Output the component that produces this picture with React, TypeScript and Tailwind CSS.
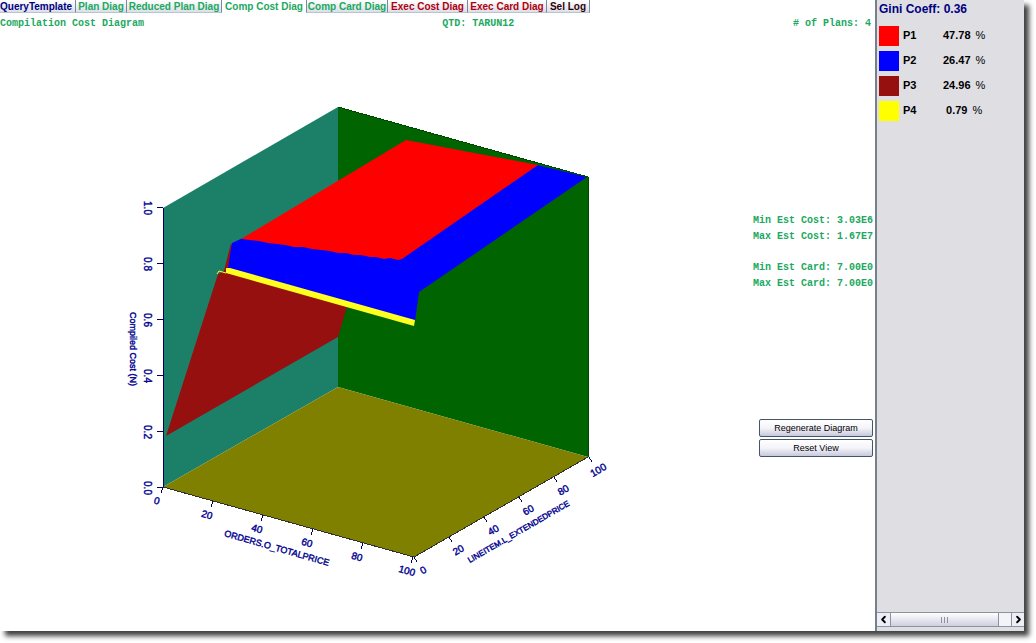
import { ChevronLeft, ChevronRight } from "lucide-react";

const tabs = [
  { label: "QueryTemplate", style: "w-[76px] text-left text-[#000080]" },
  { label: "Plan Diag", style: "w-[51px] text-[#20a860]" },
  { label: "Reduced Plan Diag", style: "w-[95px] text-[#20a860]" },
  { label: "Comp Cost Diag", style: "w-[84px] text-[#20a860]", active: true },
  { label: "Comp Card Diag", style: "w-[82px] border-l text-[#20a860]" },
  { label: "Exec Cost Diag", style: "w-[80px] text-[#b00010]" },
  { label: "Exec Card Diag", style: "w-[79px] text-[#b00010]" },
  { label: "Sel Log", style: "w-[43px] text-[#300008]" },
];

const plans = [
  { name: "P1", percent: "47.78", color: "bg-[#ff0000]" },
  { name: "P2", percent: "26.47", color: "bg-[#0000ff]" },
  { name: "P3", percent: "24.96", color: "bg-[#961010]" },
  { name: "P4", percent: "0.79", color: "bg-[#ffff00]" },
];

const costTicks = ["0.0", "0.2", "0.4", "0.6", "0.8", "1.0"];
const selectivityTicks = ["0", "20", "40", "60", "80", "100"];

const TabBar = () => {
  return (
    <div role="tablist" className="flex h-[13px] overflow-hidden text-[10px] leading-[13px] font-bold">
      {tabs.map((tab) => (
        <button
          key={tab.label}
          role="tab"
          aria-selected={!!tab.active}
          className={`${tab.style} shrink-0 whitespace-nowrap ${
            tab.active
              ? "bg-white leading-[11px]"
              : "border-r border-b border-x-[#7a8a99] border-b-[#b8c4d0] bg-linear-to-b from-white to-[#dcdfe8]"
          }`}
        >
          {tab.label}
        </button>
      ))}
    </div>
  );
};

const CostDiagram = () => {
  return (
    <svg
      viewBox="0 30 640 570"
      className="w-full max-w-[640px]"
      role="img"
      aria-label="Compilation Cost Diagram"
    >
      {/* walls and floor */}
      <polygon points="163,208 338,107 338,387 163,487" fill="#1c8068" />
      <polygon points="338,107 588,177 588,457 338,387" fill="#006400" />
      <polygon points="163,487 338,387 588,457 414,557" fill="#808000" />

      {/* cost surface */}
      <polygon points="166,436 218,274 224,271 231,243 236,262 347,307 338,337" fill="#961010" />
      <polygon points="228,269 232,243 243,238 400,258 537,165 587,177 419,292 415,321" fill="#0000ff" />
      <path
        d="M241 239 L406 140 L538 165 L402 259 L398 260 L390 258 L384 259 L376 257 L370 257 L361 255 L354 255 L346 253 L338 253 L330 251 L321 250 L312 249 L303 247 L294 247 L285 245 L277 244 L268 243 L259 241 L250 240 Z"
        fill="#ff0000"
      />
      <polygon points="226,268 230,268 415,320 414,326 226,273" fill="#ffff20" />
      <path d="M217 274 L219 271 L226 273" fill="none" stroke="#ffff20" />

      {/* axes */}
      <g stroke="#000060" fill="none" shapeRendering="crispEdges">
        <path d="M163 208 V487" />
        <path d="M163 487 L414 557 L588 457" stroke="#303030" />
        <path d="M338 107 L588 177 V457" stroke="#004800" />
        {costTicks.map((tick, i) => (
          <path key={tick} d={`M157 ${487 - i * 56} h6`} />
        ))}
        {selectivityTicks.map((tick, i) => (
          <path key={tick} d={`M${163 + i * 50} ${487 + i * 14} l-2 6`} />
        ))}
        {selectivityTicks.map((tick, i) => (
          <path key={tick} d={`M${414 + i * 35} ${557 - i * 20} l3 5`} />
        ))}
      </g>

      <g
        fill="#000090"
        stroke="#000090"
        strokeWidth="0.4"
        textAnchor="middle"
        className="font-['Liberation_Sans',sans-serif] text-[10px]"
      >
        {costTicks.map((tick, i) => (
          <text key={tick} transform={`translate(144 ${488 - i * 56}) rotate(90)`}>
            {tick}
          </text>
        ))}
        <text transform="translate(130 349) rotate(90)" className="text-[9px]">
          Compiled Cost (N)
        </text>
        {selectivityTicks.map((tick, i) => (
          <text key={tick} transform={`translate(${156 + i * 50} ${504 + i * 14}) rotate(16)`}>
            {tick}
          </text>
        ))}
        <text transform="translate(276 551) rotate(16)" className="text-[9px]">
          ORDERS.O_TOTALPRICE
        </text>
        {selectivityTicks.map((tick, i) => (
          <text key={tick} transform={`translate(${425 + i * 35} ${573 - i * 20}) rotate(-30)`}>
            {tick}
          </text>
        ))}
        <text transform="translate(520 534) rotate(-30)" className="text-[8px]">
          LINEITEM.L_EXTENDEDPRICE
        </text>
      </g>
    </svg>
  );
};

const PlanLegend = () => {
  return (
    <table className="ml-0.5 self-start text-[11px] leading-none font-bold whitespace-nowrap text-black">
      <tbody>
        {plans.map((plan) => (
          <tr key={plan.name} className="h-[25px]">
            <td className="p-0">
              <div className={`h-5 w-5 ${plan.color}`} />
            </td>
            <td className="w-11 min-w-11 py-0 pl-1">{plan.name}</td>
            <td className="p-0 text-center">
              {plan.percent} <span className="ml-0.5 font-normal">%</span>
            </td>
          </tr>
        ))}
      </tbody>
    </table>
  );
};

const ScrollBar = () => {
  return (
    <div className="mt-auto mb-1 flex h-[15px] border-y border-[#8a94a0] bg-[#f4f4f8]">
      <button aria-label="Scroll left" className="flex w-[14px] items-center justify-center border-r border-[#8a94a0] bg-[#eeeef6] text-black">
        <ChevronLeft size={11} strokeWidth={4} />
      </button>
      <div className="flex flex-1 items-center justify-center gap-[2px] border-r border-[#8a94a0] bg-linear-to-b from-white to-[#cfcfe0]">
        <i className="h-1.5 w-px bg-[#8a94a0]" />
        <i className="h-1.5 w-px bg-[#8a94a0]" />
        <i className="h-1.5 w-px bg-[#8a94a0]" />
      </div>
      <div className="w-3" />
      <button aria-label="Scroll right" className="flex w-[13px] items-center justify-center border-l border-[#8a94a0] bg-[#eeeef6] text-black">
        <ChevronRight size={11} strokeWidth={4} />
      </button>
    </div>
  );
};

const SidePanel = () => {
  return (
    <aside className="flex w-[149px] shrink-0 flex-col border-l-2 border-[#75808c] bg-[#dedee3]">
      <h2 className="mb-1.5 ml-0.5 pt-px text-[12px] leading-4 font-bold text-[#000080]">Gini Coeff: 0.36</h2>
      <PlanLegend />
      <ScrollBar />
    </aside>
  );
};

const actionButton =
  "h-[18px] w-full rounded-xs border border-[#46566a] bg-linear-to-b from-white via-[#f4f4fa] to-[#c8c8dc] text-[9px] leading-none text-black";

const App = () => {
  return (
    <div className="flex min-h-screen overflow-hidden bg-white pr-3 pb-3 font-['Liberation_Sans',sans-serif]">
      <div className="flex flex-1 bg-white shadow-[5px_5px_5px_rgba(0,0,0,0.75)]">
        <main className="flex min-w-0 flex-1 flex-col">
          <TabBar />
          <header className="grid grid-cols-3 pt-1 pr-1 font-['Liberation_Mono',monospace] text-[10px] leading-[13px] font-bold text-[#20a860]">
            <h1>Compilation Cost Diagram</h1>
            <p className="pl-[152px]">QTD: TARUN12</p>
            <p className="text-right"># of Plans: 4</p>
          </header>
          <div className="flex flex-1">
            <div className="min-w-0 flex-1">
              <CostDiagram />
            </div>
            <div className="flex w-[122px] flex-col pt-[183px] pr-0.5">
              <div className="font-['Liberation_Mono',monospace] text-[10px] leading-4 font-bold whitespace-pre text-[#20a860]">
                <p>Min Est Cost: 3.03E6</p>
                <p>Max Est Cost: 1.67E7</p>
                <p className="mt-[15px]">Min Est Card: 7.00E0</p>
                <p>Max Est Card: 7.00E0</p>
              </div>
              <div className="mt-[127px] flex flex-col gap-0.5 pl-1.5">
                <button className={actionButton}>Regenerate Diagram</button>
                <button className={actionButton}>Reset View</button>
              </div>
            </div>
          </div>
        </main>
        <SidePanel />
      </div>
    </div>
  );
};

export default App;
